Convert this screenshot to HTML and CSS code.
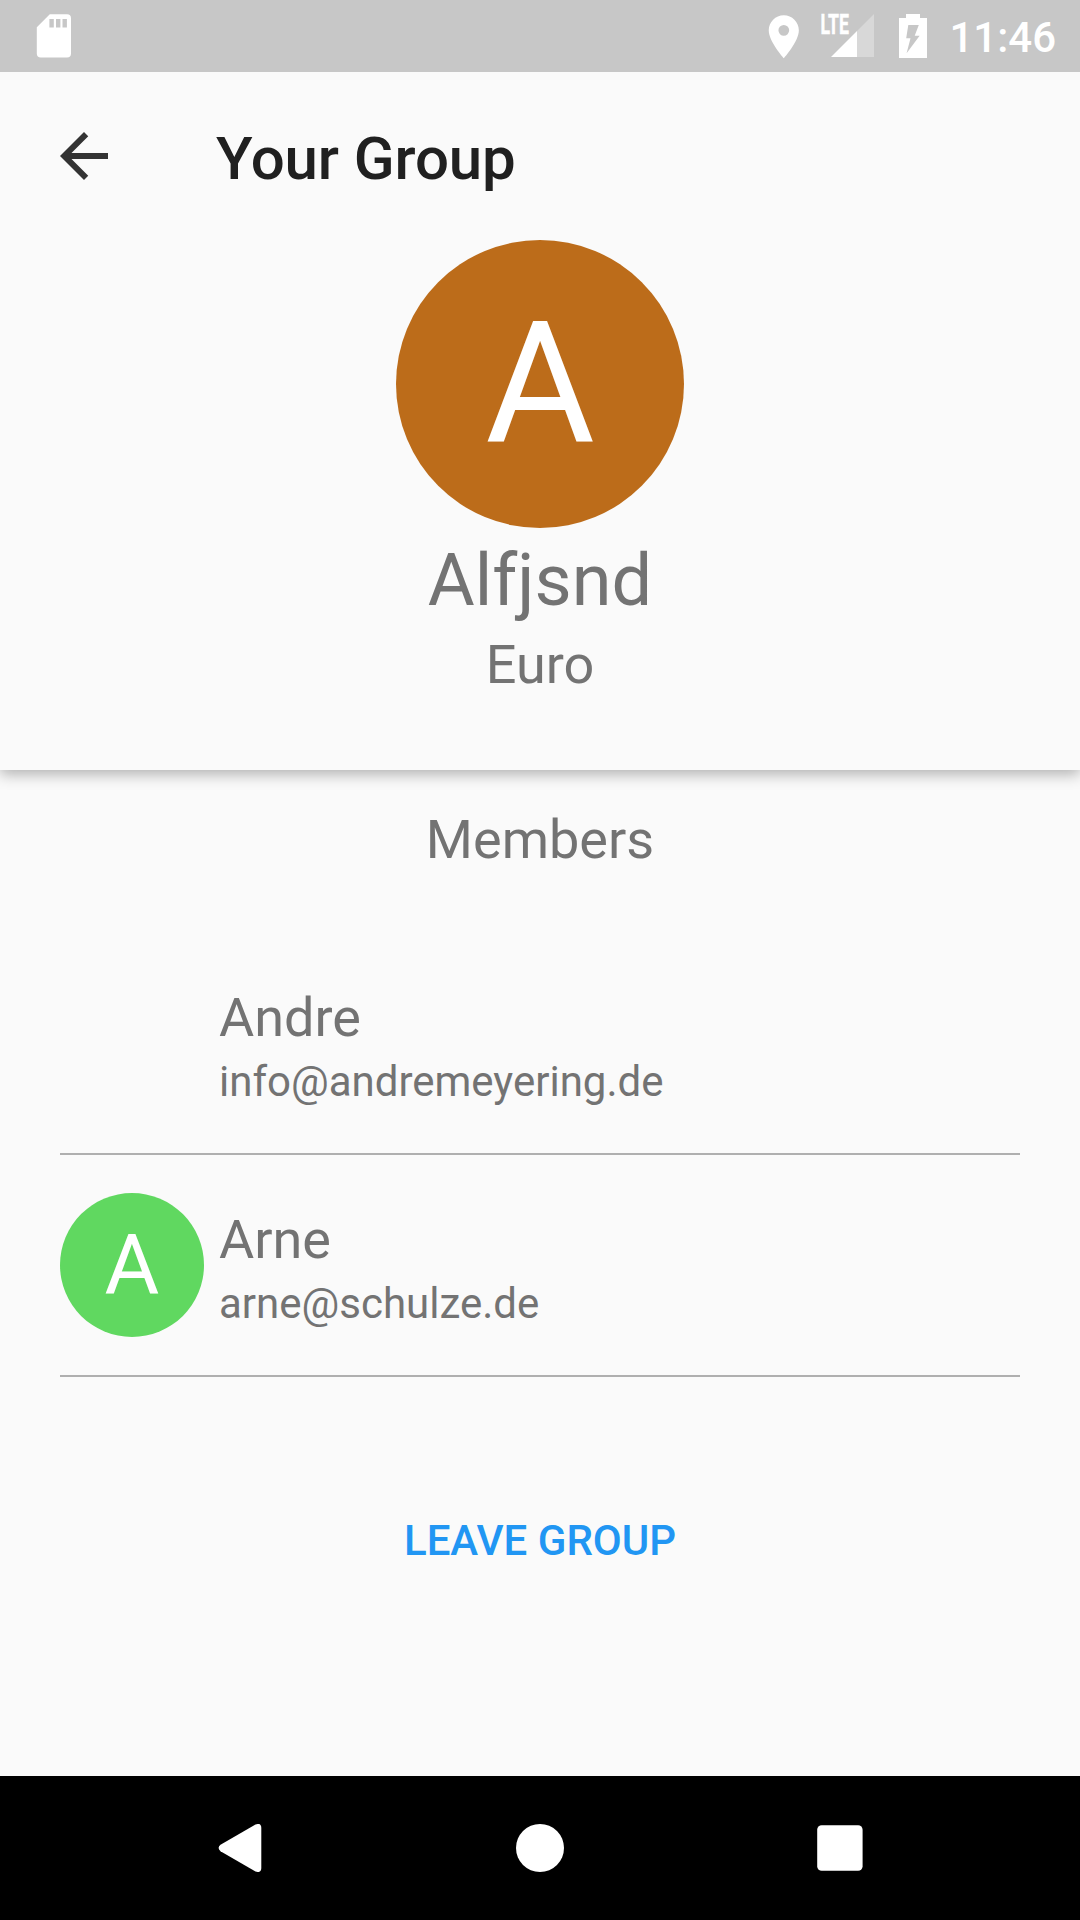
FILE: index.html
```html
<!DOCTYPE html>
<html lang="en">
<head>
<meta charset="utf-8">
<title>Your Group</title>
<link rel="stylesheet" href="styles.css">
</head>
<body>
<div class="screen">
  <div class="status-bar">
    <svg class="icon-sd" width="36" height="46" viewBox="0 0 36 46">
      <path fill="#fff" fill-rule="evenodd" d="M13.8 1.3H31Q35 1.3 35 5.3V40.6Q35 44.6 31 44.6H4.8Q.8 44.6 .8 40.6V14.3ZM13.4 6h4.4v8.6h-4.4ZM20 6h4.4v8.6H20ZM26.5 6h4.4v8.6h-4.4Z"/>
    </svg>
    <div class="status-icons">
      <svg class="icon-place" width="51.6" height="51.6" viewBox="0 0 24 24">
        <path fill="#fff" d="M12 2C8.13 2 5 5.13 5 9c0 5.25 7 13 7 13s7-7.75 7-13c0-3.87-3.13-7-7-7zm0 9.5a2.5 2.5 0 0 1 0-5 2.5 2.5 0 0 1 0 5z"/>
      </svg>
      <svg class="icon-signal" width="56" height="58" viewBox="-2 -12 56 58">
        <path fill="#d8d8d8" d="M54 1V44H37V18Z"/>
        <path fill="#fff" d="M37 18V44H11Z"/>
        <text class="lte" x="0.5" y="20.7" textLength="28.5" lengthAdjust="spacingAndGlyphs">LTE</text>
      </svg>
      <svg class="icon-battery" width="28" height="44" viewBox="0 0 28 44">
        <path fill="#fff" fill-rule="evenodd" d="M7 0H21V4H28V44H0V4H7ZM9.3 11 7.2 24.3H11.5L7.6 39.3 20.6 21.7H15.7L19.8 11Z"/>
      </svg>
      <span class="clock">11:46</span>
    </div>
  </div>

  <header class="group-header">
    <div class="app-bar">
      <svg class="icon-back" width="72" height="72" viewBox="0 0 24 24">
        <path fill="#333" d="M20 11H7.83l5.59-5.59L12 4l-8 8 8 8 1.41-1.41L7.83 13H20v-2z"/>
      </svg>
      <h1 class="title">Your Group</h1>
    </div>
    <div class="avatar avatar-large">A</div>
    <div class="group-name">Alfjsnd</div>
    <div class="group-currency">Euro</div>
  </header>

  <main class="content">
    <h2 class="section-title">Members</h2>
    <ul class="members">
      <li class="member">
        <div class="avatar-slot"></div>
        <div class="member-info">
          <div class="member-name">Andre</div>
          <div class="member-email">info@andremeyering.de</div>
        </div>
      </li>
      <li class="member">
        <div class="avatar avatar-small">A</div>
        <div class="member-info">
          <div class="member-name">Arne</div>
          <div class="member-email">arne@schulze.de</div>
        </div>
      </li>
    </ul>
    <button class="leave" type="button">LEAVE GROUP</button>
  </main>

  <nav class="nav-bar">
    <svg width="48" height="48" viewBox="0 0 48 48">
      <path fill="#fff" d="M4.5 20.8 39.5 .5Q45.3 -1.5 45.3 4V44Q45.3 49.5 39.5 47.5L4.5 27.2Q.7 24 4.5 20.8Z"/>
    </svg>
    <svg width="48" height="48" viewBox="0 0 48 48"><circle cx="24" cy="24" r="24" fill="#fff"/></svg>
    <svg width="48" height="48" viewBox="0 0 48 48"><rect x="1.2" y="1.3" width="45.4" height="45.4" rx="4.5" fill="#fff"/></svg>
  </nav>
</div>
</body>
</html>
```
FILE: styles.css
```css
* {
  box-sizing: border-box;
}

body {
  margin: 0;
  font-family: Roboto, "Noto Sans", sans-serif;
  color: #737373;
  background: #fafafa;
}

.screen {
  display: flex;
  flex-direction: column;
  width: 1080px;
  height: 1920px;
  background: #fafafa;
  overflow: hidden;
}

.status-bar {
  display: flex;
  flex: none;
  justify-content: space-between;
  align-items: flex-start;
  height: 72px;
  padding: 0 24px 0 36px;
  background: #c7c7c7;
}

.status-bar svg {
  display: block;
  flex: none;
}

.icon-sd {
  margin-top: 13px;
}

.status-icons {
  display: flex;
  align-items: flex-start;
}

.icon-place {
  margin-top: 10.7px;
}

.icon-signal {
  margin: 1px 25px 0 9px;
  overflow: visible;
}

.icon-battery {
  margin-top: 14px;
}

.lte {
  font-size: 27px;
  font-weight: 700;
  fill: #fff;
  stroke: #fff;
  stroke-width: 0.5px;
}

.clock {
  margin: 12.5px 0 0 22px;
  font-size: 42px;
  font-weight: 500;
  line-height: 50px;
  color: #fff;
}

.group-header {
  display: flex;
  flex: none;
  flex-direction: column;
  align-items: center;
  height: 698px;
  background: #fafafa;
  box-shadow: 0 4px 14px rgba(0, 0, 0, 0.31);
  clip-path: inset(0 0 -40px 0);
}

.app-bar {
  display: flex;
  align-items: center;
  align-self: stretch;
  gap: 96px;
  height: 168px;
  padding-left: 48px;
}

.icon-back {
  display: block;
}

.title {
  margin: 0;
  padding-top: 5px;
  font-size: 60px;
  font-weight: 500;
  line-height: 72px;
  letter-spacing: -0.1px;
  color: #202020;
}

.avatar {
  display: flex;
  flex: none;
  align-items: center;
  justify-content: center;
  border-radius: 50%;
  color: #fff;
}

.avatar-large {
  width: 288px;
  height: 288px;
  background: #bc6c1a;
  font-size: 168px;
  line-height: 196px;
}

.avatar-small {
  width: 144px;
  height: 144px;
  padding-top: 2px;
  background: #60d860;
  font-size: 84px;
  line-height: 98px;
}

.avatar-slot {
  flex: none;
  width: 144px;
  height: 144px;
}

.group-name {
  margin-top: 11px;
  font-size: 72px;
  line-height: 84px;
}

.group-currency {
  margin-top: 10px;
  font-size: 54px;
  line-height: 64px;
}

.content {
  display: flex;
  flex: 1;
  flex-direction: column;
  align-items: center;
  padding: 38px 60px 0;
}

.section-title {
  margin: 0;
  font-size: 54px;
  font-weight: 400;
  line-height: 64px;
}

.members {
  align-self: stretch;
  margin: 61px 0 0;
  padding: 0;
  list-style: none;
}

.member {
  display: flex;
  align-items: center;
  gap: 15px;
  height: 222px;
  border-bottom: 2px solid #afafaf;
}

.member-info {
  padding-top: 6px;
}

.member-name {
  font-size: 54px;
  line-height: 64px;
}

.member-email {
  margin-top: 7px;
  font-size: 42px;
  line-height: 50px;
}

.leave {
  margin: 139px 0 0;
  padding: 0;
  border: 0;
  background: none;
  font-family: inherit;
  font-size: 42px;
  font-weight: 500;
  line-height: 50px;
  color: #2196f3;
}

.nav-bar {
  display: flex;
  flex: none;
  align-items: center;
  justify-content: space-between;
  height: 144px;
  padding: 0 216px;
  background: #000;
}
```
